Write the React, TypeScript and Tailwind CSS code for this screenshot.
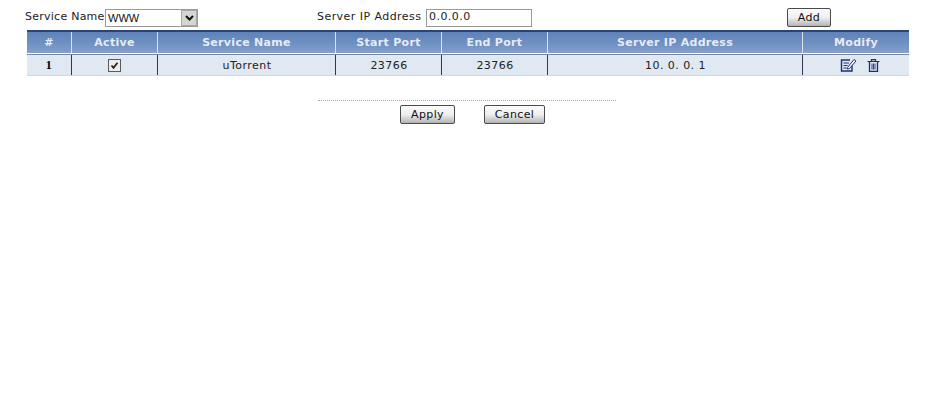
const font = "font-['Verdana','DejaVu_Sans',sans-serif]";

const cols = [
  { w: "w-[45px]", head: "#", val: "1", bold: true },
  { w: "w-[86px]", head: "Active" },
  { w: "w-[178px]", head: "Service Name", val: "uTorrent" },
  { w: "w-[106px]", head: "Start Port", val: "23766" },
  { w: "w-[106px]", head: "End Port", val: "23766" },
  { w: "w-[255px]", head: "Server IP Address", val: "10. 0. 0. 1" },
  { w: "w-[106px]", head: "Modify" },
];

function Check() {
  return (
    <div className="w-[13px] h-[13px] border border-[#5a5a5a] bg-[#ececec] flex items-center justify-center">
      <svg width="9" height="9" viewBox="0 0 9 9" fill="none">
        <path d="M1.5 4.5 L3.5 6.8 L7.5 1.8" stroke="#222" strokeWidth="1.8" />
      </svg>
    </div>
  );
}

function EditIcon() {
  return (
    <svg width="17" height="14" viewBox="0 0 17 14" fill="none">
      <path d="M12 5 V13 H1.5 V2 H10" stroke="#1c2f6e" strokeWidth="1.4" />
      <path d="M3.5 5 H9 M3.5 7.5 H7.5 M3.5 10 H6.5" stroke="#1c2f6e" strokeWidth="1.1" />
      <path d="M7.5 9.5 L14 1.5 L16 3 L9.5 10.5 L7 11 Z" fill="#fff" stroke="#1c2f6e" strokeWidth="1" />
    </svg>
  );
}

function TrashIcon() {
  return (
    <svg width="13" height="13" viewBox="0 0 13 13" fill="none">
      <path d="M0.5 2.5 H12.5 M4.5 2.5 V0.7 H8.5 V2.5" stroke="#1c2f6e" strokeWidth="1.2" />
      <path d="M2.5 3 V12.4 H10.5 V3" stroke="#1c2f6e" strokeWidth="1.3" />
      <path d="M5 4.5 V10.5 M6.5 4.5 V10.5 M8 4.5 V10.5" stroke="#1c2f6e" strokeWidth="0.9" />
    </svg>
  );
}

function Btn({ w, children }: { w: string; children: string }) {
  return (
    <button className={`${w} h-[19px] rounded-[2px] border border-[#4a4a4a] bg-gradient-to-b from-[#fbfbfb] via-[#efefef] to-[#b4b4b4] text-[11px] leading-none text-[#111] tracking-[0.4px] flex items-center justify-center`}>
      {children}
    </button>
  );
}

export default function App() {
  return (
    <div className={`${font} w-[927px] h-[400px] bg-white text-[11px] text-[#222] tracking-[0.45px] overflow-hidden`}>
      <div className="flex items-start pt-[8px] pl-[25px] h-[30px]">
        <div className="w-[292px] flex items-center h-[19px]">
          <span className="w-[80px] whitespace-nowrap tracking-[0.25px]">Service Name</span>
          <div className="relative w-[93px] h-[18px]">
            <select className="appearance-none w-full h-full border border-[#9a9a9a] pl-[2px] text-[11px] font-['Liberation_Sans',sans-serif] bg-white outline-none text-[#111] tracking-normal">
              <option>WWW</option>
            </select>
            <div className="absolute right-[1px] top-[1px] w-[16px] h-[16px] bg-[#d4d6d0] border border-[#a9a9a9] flex items-center justify-center">
              <svg width="9" height="6" viewBox="0 0 9 6" fill="none">
                <path d="M1 1 L4.5 4.5 L8 1" stroke="#111" strokeWidth="2" />
              </svg>
            </div>
          </div>
        </div>
        <div className="w-[470px] flex items-center h-[19px]">
          <span className="w-[109px] whitespace-nowrap">Server IP Address</span>
          <div className="w-[106px] h-[18px] border border-[#9a9a9a] pl-[2px] flex items-center text-[#222]">0.0.0.0</div>
        </div>
        <Btn w="w-[44px]">Add</Btn>
      </div>

      <div className="ml-[27px] w-[882px]">
        <div className="flex h-[23px] border-t-2 border-[#2b4478] bg-gradient-to-b from-[#5f83b8] via-[#6c8fc4] to-[#86a0c8] font-bold tracking-[0.3px]">
          {cols.map((c, i) => (
            <div key={c.head} className={`${c.w} ${i < cols.length - 1 ? "border-r border-[#dde2ea]" : ""} flex items-center justify-center pt-[1px] text-[#e6ebf3]`}>
              {c.head}
            </div>
          ))}
        </div>
        <div className="h-[1px] bg-white" />
        <div className="flex h-[22px] bg-[#e0e8f2] border-b border-[#d4d8de] border-t border-t-[#7b8799]">
          {cols.map((c, i) => (
            <div key={c.head} className={`${c.w} ${i < cols.length - 1 ? "border-r border-[#2f3850]" : ""} flex items-center justify-center ${c.bold ? "font-bold font-['Liberation_Serif',serif] text-[12px] text-black" : c.val ? "pt-[3px] pl-[1px]" : ""}`}>
              {c.head === "Active" ? <Check /> : c.head === "Modify" ? (
                <div className="flex items-center gap-[10px] pl-[8px]"><EditIcon /><TrashIcon /></div>
              ) : c.val}
            </div>
          ))}
        </div>
      </div>

      <div className="ml-[318px] mt-[24px] w-[298px] border-t border-dotted border-[#a8a8a8]" />
      <div className="ml-[400px] mt-[4px] flex gap-[29px]">
        <Btn w="w-[55px]">Apply</Btn>
        <Btn w="w-[61px]">Cancel</Btn>
      </div>
    </div>
  );
}
